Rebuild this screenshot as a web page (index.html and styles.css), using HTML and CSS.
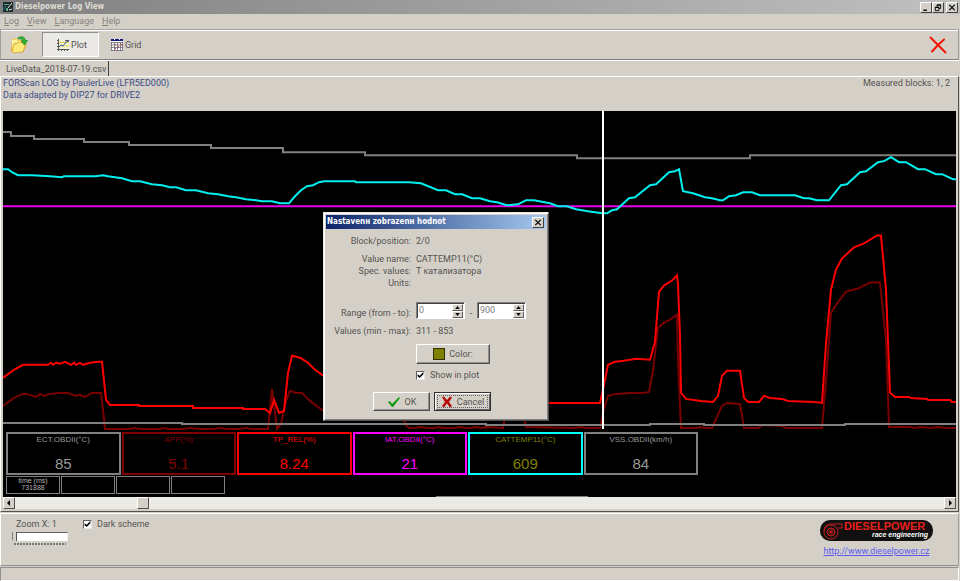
FILE: index.html
```html
<!DOCTYPE html>
<html lang="en">
<head>
  <meta charset="UTF-8" />
  <title>Dieselpower Log View</title>
  <link rel="stylesheet" href="styles.css">
</head>
<body>

  <header class="titlebar">
    <svg class="app-icon" viewBox="0 0 10 10">
      <rect width="10" height="10" fill="#1c2a2a" />
      <path d="M1 2h5v1H1zM3 6h2v3H3z" fill="#5fae8c" />
      <path d="M9 1L5 6M6 8l3-1" stroke="#dfe8e0" fill="none" />
      <path d="M0 8l3-4" stroke="#2f7fa8" fill="none" />
    </svg>
    <h1>Dieselpower Log View</h1>
    <div class="window-buttons">
      <button class="win-btn" aria-label="Minimize"><svg viewBox="0 0 10 10"><path d="M2 8h4" stroke="#000" stroke-width="1.5" /></svg></button>
      <button class="win-btn" aria-label="Restore"><svg viewBox="0 0 10 10"><path d="M4 4V2h4v4H6M4 2.5h4M2 4.5h4v4H2zM2 5h4" fill="none" stroke="#000" /></svg></button>
      <button class="win-btn win-close" aria-label="Close"><svg viewBox="0 0 10 10"><path d="M2 2l6 6M8 2L2 8" stroke="#000" stroke-width="1.3" /></svg></button>
    </div>
  </header>

  <nav class="menu">
    <a href="#"><u>L</u>og</a>
    <a href="#"><u>V</u>iew</a>
    <a href="#"><u>L</u>anguage</a>
    <a href="#"><u>H</u>elp</a>
  </nav>

  <div class="toolbar">
    <button class="tool tool-open" aria-label="Open">
      <svg width="20" height="20" viewBox="0 0 20 20">
        <path d="M2 16L3 4l5-1 1 2 6 0v3l3 1-3 7-11 2z" fill="#e8b93c" />
        <path d="M3 16l2-7 4-1 1-1 7 1-3 9-9 1z" fill="#ffe97a" stroke="#c99a2c" stroke-width=".7" />
        <path d="M3 5l5-1 1 2 4 0v1L9 7 8 8 5 8 3 13z" fill="#fff09a" />
        <path d="M9 3c3-2.500 7-1.500 7.500 2.500h2L15.500 10 12 6h2c-.5-2-2.500-2.500-5-2z" fill="#2fb52f" stroke="#117a1d" stroke-width=".6" />
      </svg>
    </button>
    <button class="tool active">
      <svg width="14" height="14" viewBox="0 0 14 14">
        <path d="M3 2h10v9H3z" fill="#f3f3d8" />
        <path d="M3 4.500h10M3 8h10" stroke="#e3d840" />
        <path d="M2.500 1v12M1 11.500h12M1 2.500h2M1 5.500h2M1 8.500h2M5.500 11v2M8.500 11v2M11.500 11v2M9 2.500h4" stroke="#555" fill="none" />
        <path d="M3 9l2-2 2 1 3-4 3-1" stroke="#3958a8" fill="none" />
      </svg>
      Plot
    </button>
    <button class="tool">
      <svg width="14" height="14" viewBox="0 0 14 14">
        <rect x="1" y="1" width="12" height="12" fill="#fff" />
        <path d="M1 4.500h12M1 7h12M1 9.500h12M1.500 4v9M4.500 4v9M7.500 4v9M10.500 4v9M12.500 4v9M1 12.500h12" stroke="#6c6470" stroke-width=".8" />
        <path d="M5 6h1v1H5zM8 8h1v1H8zM5 10h1v1H5zM11 6h1v1h-1z" fill="#e04040" />
        <path d="M1 1h12v2H1z" fill="#15157c" />
        <path d="M4 1h1v1H4zM9 1h1v1H9z" fill="#fff" />
      </svg>
      Grid
    </button>
    <button class="tool tool-exit" aria-label="Close file">
      <svg width="18" height="18" viewBox="0 0 18 18">
        <path d="M1.500 1.500L9 9l7.500 7.500M15 3.500L9 9l-6 6.500" fill="none" stroke="#f41400" stroke-width="2" stroke-linecap="round" />
      </svg>
    </button>
  </div>

  <div class="tabs">
    <button class="tab">LiveData_2018-07-19.csv</button>
  </div>

  <main class="page">
    <div class="file-info">
      <p class="source">FORScan LOG by PaulerLive (LFR5ED000)<br>Data adapted by DIP27 for DRIVE2</p>
      <p>Measured blocks: 1, 2</p>
    </div>

    <section class="plot">
      <svg class="curves" viewBox="3 111 953 320" preserveAspectRatio="none">
        <!-- ECT -->
        <polyline class="gray" points="3,132 11,132 11,136 34,136 34,139 84,139 84,142 129,142 129,145 211,145 211,148 283,148 283,152 365,152 365,155 577,155 577,158 750,158 750,155 956,155" />
        <!-- APP -->
        <polyline class="maroon" points="3,405 14,397 23,393 30,394 36,396 40,393 44,395 50,393 60,392 68,392 76,395 80,394 85,396 92,392 101,392 104,418 105,428 130,428 134,427 140,428 160,428 164,427 168,428 184,428 190,427 200,428 214,428 220,427 226,428 240,428 246,427 252,428 268,428 272,388 277,428 281,423 286,400 290,390 296,392 302,392 310,400 322,409 400,412 406,424 409,427 416,427 420,426 428,427 434,427 438,426 444,427 456,427 460,426 466,427 472,427 476,426 482,427 486,426 503,427 506,412 523,412 526,426 575,427 581,426 586,427 600,427 604,408 608,395 616,393 630,392 643,392 649,391 653,370 658,327 664,322 670,319 677,314 678,360 681,427 697,427 701,426 705,427 712,427 722,405 727,402 740,403 744,427 758,427 763,424 782,425 786,427 822,427 826,380 831,312 837,303 846,291 858,288 870,282 880,282 886,340 889,426 911,426 914,427 920,426 930,427 938,426 944,427 956,427" />
        <!-- TP_REL -->
        <polyline class="red" points="3,377 14,369 23,364 48,364 51,362 53,364 56,362 60,363 65,361 71,364 74,362 76,364 80,362 83,364 90,362 98,361 102,361 106,399 110,404 139,404 139,405 193,405 193,407 243,407 243,408 265,408 270,412 274,399 279,412 284,410 288,372 292,355 300,357 308,362 315,369 322,374 400,402 600,402 604,384 608,364 615,361 624,360 636,358 650,359 655,341 659,291 664,285 672,280 677,275 678,284 680,335 681,392 686,398 701,400 713,401 718,395 722,375 727,370 740,370 744,397 748,401 759,401 764,395 770,397 782,398 788,400 814,401 822,402 826,343 831,289 836,269 842,258 854,247 864,243 877,235 881,235 886,289 890,392 895,396 909,396 911,397 927,398 928,399 950,399 952,401 956,401" />
        <!-- IAT -->
        <polyline class="magenta" points="3,206 956,206" />
        <!-- CATTEMP11 -->
        <polyline class="cyan" points="3,169 8,169 12,172 18,175 32,175 50,176 62,177 64,176 96,176 103,175 108,176 122,178 132,181 140,181 152,184 162,185 170,187 176,187 186,190 196,190 208,193 218,194 228,196 236,197 246,199 256,200 262,201 272,201 280,203 289,203 295,196 301,190 307,186 313,185 319,182 324,181 355,181 356,182 409,182 421,183 438,190 446,190 455,194 462,194 472,198 480,198 490,201 497,202 507,205 518,204 526,200 534,200 550,203 558,206 567,206 576,209 588,211 602,213 607,213 612,210 617,209 629,198 635,197 650,185 656,184 669,172 675,171 679,169 683,191 693,193 705,197 712,198 720,200 723,200 729,196 736,195 743,192 752,192 760,195 795,195 804,198 809,198 817,200 829,200 841,185 847,184 860,172 866,171 878,162 884,161 891,157 899,162 906,162 918,169 925,169 936,174 942,174 953,179 956,179" />
        <!-- VSS -->
        <polyline class="gray" points="3,422 182,422 182,423 486,423 486,424 650,424 650,423 704,423 704,424 845,424 845,423 956,423" />
        <path class="cursor" d="M603 111V428" />
      </svg>

      <div class="gauges">
        <div class="gauge g-gray"><span>ECT.OBDII(°C)</span><b>85</b></div>
        <div class="gauge g-maroon"><span>APP(%)</span><b>5.1</b></div>
        <div class="gauge g-red"><span>TP_REL(%)</span><b>8.24</b></div>
        <div class="gauge g-magenta"><span>IAT.OBDII(°C)</span><b>21</b></div>
        <div class="gauge g-cattemp"><span>CATTEMP11(°C)</span><b>609</b></div>
        <div class="gauge g-gray"><span>VSS.OBDII(km/h)</span><b>84</b></div>
      </div>
      <div class="cells">
        <div class="cell">time (ms)<br>731888</div>
        <div class="cell"></div>
        <div class="cell"></div>
        <div class="cell"></div>
      </div>
    </section>

    <div class="scrollbar">
      <button class="scroll-btn" aria-label="Scroll left"><svg viewBox="0 0 10 10"><path d="M6 2v6L3 5z" /></svg></button>
      <div class="scroll-track"><div class="scroll-thumb"></div></div>
      <button class="scroll-btn" aria-label="Scroll right"><svg viewBox="0 0 10 10"><path d="M4 2v6l3-3z" /></svg></button>
    </div>
  </main>

  <footer class="options">
    <div class="zoom">
      <label for="zoomX">Zoom X: 1</label>
      <input type="range" id="zoomX" min="1" max="16" value="1">
      <div class="ticks"></div>
    </div>
    <label class="check"><input type="checkbox" checked> Dark scheme</label>
    <div class="brand">
      <div class="logo">
        <svg width="22" height="18" viewBox="0 0 22 18">
          <g fill="none" stroke="#c8201c">
            <circle cx="9" cy="10" r="7" />
            <circle cx="9" cy="10" r="4" />
            <path d="M9 6v8M5 10h8M6 7l6 6M12 7l-6 6" stroke-width=".8" />
            <path d="M2 9c0-4 3-7 7-7h11v4h-4" />
          </g>
        </svg>
        <div class="logo-text"><strong>DIESELPOWER</strong><em>race engineering</em></div>
      </div>
      <a href="http://www.dieselpower.cz">http://www.dieselpower.cz</a>
    </div>
  </footer>

  <div class="statusbar"></div>

  <form class="dialog">
    <div class="dialog-title">
      <h2>Nastavenн zobrazenн hodnot</h2>
      <button type="button" class="win-btn" aria-label="Close"><svg viewBox="0 0 10 10"><path d="M2 2l6 6M8 2L2 8" stroke="#000" stroke-width="1.3" /></svg></button>
    </div>
    <dl class="fields">
      <dt>Block/position:</dt><dd>2/0</dd>
      <dt class="group">Value name:</dt><dd class="group">CATTEMP11(°C)</dd>
      <dt>Spec. values:</dt><dd>T катализатора</dd>
      <dt>Units:</dt><dd></dd>
    </dl>
    <div class="range-row">
      <label for="rangeFrom">Range (from - to):</label>
      <div class="spin">
        <input type="text" id="rangeFrom" value="0">
        <div class="arrows">
          <button type="button" aria-label="Increase"><svg viewBox="0 0 6 4"><path d="M0 4l3-4 3 4z" /></svg></button>
          <button type="button" aria-label="Decrease"><svg viewBox="0 0 6 4"><path d="M0 0l3 4 3-4z" /></svg></button>
        </div>
      </div>
      <span class="dash">-</span>
      <div class="spin">
        <input type="text" id="rangeTo" aria-label="Range to" value="900">
        <div class="arrows">
          <button type="button" aria-label="Increase"><svg viewBox="0 0 6 4"><path d="M0 4l3-4 3 4z" /></svg></button>
          <button type="button" aria-label="Decrease"><svg viewBox="0 0 6 4"><path d="M0 0l3 4 3-4z" /></svg></button>
        </div>
      </div>
    </div>
    <dl class="fields minmax">
      <dt>Values (min - max):</dt><dd>311 - 853</dd>
    </dl>
    <div class="plot-options">
      <button type="button" class="btn btn-color"><span class="swatch"></span>Color:</button>
      <label class="check"><input type="checkbox" checked> Show in plot</label>
    </div>
    <div class="dialog-buttons">
      <button type="button" class="btn">
        <svg width="14" height="12" viewBox="0 0 14 12"><path d="M1 6l2-1 2 3 7-7 1 1-7 9H5z" fill="#0c9a0c" /></svg>OK
      </button>
      <button type="button" class="btn btn-default">
        <svg width="12" height="12" viewBox="0 0 12 12"><path d="M1 1l2-.5 3 3.500 3-3.500 2 1L8 6l3 4-2 1.500-3-4-3 4L1 10l3-4z" fill="#b80808" /></svg>Cancel
      </button>
    </div>
  </form>

</body>
</html>
```
FILE: styles.css
```css
* { box-sizing: border-box; }
body {
  margin: 0; min-height: 100vh;
  display: flex; flex-direction: column;
  background: #d4d0c8; color: #555350;
  font: 9px/12px Roboto, "Liberation Sans", Arial, sans-serif;
}
h1, h2, p, dl, dd { margin: 0; }
h1, h2 { font: bold 8px/12px "DejaVu Sans Condensed", "Noto Sans", sans-serif; }
button, input { font: inherit; color: inherit; margin: 0; padding: 0; }
svg { display: block; }

.titlebar {
  display: flex; align-items: center; height: 14px; padding: 0 2px 0 3px;
  background: linear-gradient(to right, #808080, #c0c0c0); color: #dedbd4;
}
.app-icon { width: 10px; height: 10px; margin-right: 2px; }
.window-buttons { display: flex; margin-left: auto; }
.win-btn {
  width: 12px; height: 11px; background: #d4d0c8;
  border: 1px solid; border-color: #fff #404040 #404040 #fff;
}
.win-btn svg { width: 100%; height: 100%; }
.win-close { margin-left: 2px; }

.menu { display: flex; gap: 8px; height: 15px; padding: 1px 4px; }
.menu a { color: #85827c; text-decoration: none; }

.toolbar {
  display: flex; align-items: center; height: 31px; margin-right: 1px; padding: 0 8px 0 6px;
  border: 1px solid; border-color: #a5a5a5 #a0a0a0 #808080;
  box-shadow: inset 0 1px #fff, 0 1px #fff;
}
.tool {
  display: flex; align-items: center; gap: 1px; height: 25px; padding: 0 10px;
  background: none; border: 1px solid transparent;
}
.tool-open { padding: 0 1px; margin-right: 11px; }
.tool.active { padding: 0 11px 0 13px; background: #ebe9e5; border-color: #909090 #fff #fff #909090; }
.tool-exit { margin-left: auto; padding: 0 2px; }

.tabs { display: flex; height: 15px; margin-top: 1px; padding-left: 1px; }
.tab {
  padding: 0 2px 0 5px; background: none;
  border: 0; border-right: 1px solid #404040;
}

.page {
  flex: 1; display: flex; flex-direction: column;
  margin-right: 1px; padding: 0 2px 2px;
  border: 1px solid; border-color: #fff #505050 #505050 #fff;
}
.file-info { display: flex; justify-content: space-between; height: 34px; padding: 0 6px 0 0; }
.source { color: #3c4c86; }

.plot {
  flex: 1; display: flex; flex-direction: column; padding-bottom: 3px;
  background: #000 linear-gradient(#808080, #808080) 54% 100% / 152px 1px no-repeat;
}
.curves { flex: 1; width: 100%; height: 0; min-height: 200px; }
.curves polyline, .curves path { fill: none; stroke-width: 2; vector-effect: non-scaling-stroke; }
.gray { stroke: #808080; }
.maroon { stroke: #780000; }
.red { stroke: #ff0000; }
.magenta { stroke: #e800e8; }
.cyan { stroke: #00f0f0; }
.cursor { stroke: #fff; }

.gauges {
  display: grid; grid-template-columns: repeat(6, 1fr); gap: 1px;
  max-width: 692px; margin-left: 3px;
}
.gauge {
  display: flex; flex-direction: column; align-items: center; justify-content: space-between;
  height: 43px; border: 2px solid;
  font: 8px/12px "Liberation Sans", Arial, sans-serif;
}
.gauge b { font-size: 15px; line-height: 18px; font-weight: normal; }
.g-gray { color: #999; border-color: #808080; }
.g-maroon { color: #800000; }
.g-red { color: #ff0000; }
.g-magenta { color: #ff00ff; }
.g-cattemp { color: #808000; border-color: #00ffff; }
.cells { display: grid; grid-template-columns: repeat(4, 54px); gap: 1px; margin: 1px 0 0 3px; }
.cell {
  height: 18px; border: 1px solid #808080; color: #b0b0b0;
  font: 7px/7px "Liberation Sans", Arial, sans-serif; text-align: center;
}

.scrollbar { display: flex; height: 12px; background: #ebeae4; }
.scroll-btn, .scroll-thumb {
  width: 12px; background: #d4d0c8;
  border: 1px solid; border-color: #fff #505050 #505050 #fff;
}
.scroll-track { flex: 1; display: flex; padding-left: 12.8%; }

.options {
  display: flex; height: 53px; margin: 1px 1px 0 0; padding: 4px 21px 0 11px;
  border: 1px solid; border-color: #fff #a0a0a0 #909090 #fff;
}
.zoom { width: 56px; margin-right: 15px; }
.zoom label { display: block; padding-left: 4px; }
.zoom input {
  appearance: none; display: block; width: 100%; height: 9px; margin-top: 2px;
  background: #fff; border: 1px solid; border-color: #606060 #eee #fff #808080;
}
.zoom input::-webkit-slider-thumb {
  appearance: none; width: 4px; height: 9px;
  background: #d4d0c8; border-right: 1px solid #505050;
}
.ticks {
  height: 2px; margin: 2px 2px 0;
  background: repeating-linear-gradient(to right, #777 0 2px, transparent 2px 3px);
}
.check { display: flex; align-items: center; gap: 5px; height: 12px; }
.check input {
  appearance: none; width: 9px; height: 9px; background: #fff;
  border: 1px solid; border-color: #606060 #e8e8e8 #e8e8e8 #606060;
}
.check input:checked::before {
  content: ""; display: block; width: 7px; height: 7px; background: #000;
  clip-path: polygon(8% 38%, 38% 62%, 92% 8%, 92% 40%, 38% 94%, 8% 68%);
}
.brand { display: flex; flex-direction: column; align-items: center; margin: 2px 4px 0 auto; }
.logo {
  display: flex; align-items: center; width: 113px; height: 21px; padding-left: 2px;
  background: #101010; border-radius: 10px;
  font-family: "Liberation Sans", Arial, sans-serif;
}
.logo-text { display: flex; flex-direction: column; width: 84px; }
.logo-text strong { color: #e8211b; font-size: 11px; line-height: 9px; }
.logo-text em { color: #fff; font-size: 7px; line-height: 8px; font-weight: bold; text-align: right; }
.brand a { margin-top: 4px; color: #5a5af0; }

.statusbar {
  height: 14px; margin: 1px 1px 0 0;
  border: 1px solid; border-color: #909090 #fff #fff #909090;
}

.dialog {
  position: absolute; left: 323px; top: 212px; width: 226px; padding: 1px 2px 9px 1px;
  background: #d4d0c8;
  border: 1px solid; border-color: #e8e6e0 #505050 #505050 #e8e6e0;
  box-shadow: inset 1px 1px #fff, inset -1px -1px #808080;
}
.dialog-title {
  display: flex; align-items: center; justify-content: space-between;
  height: 14px; margin: 1px 0 6px 1px; padding: 0 2px 0 1px;
  background: linear-gradient(to right, #0a246a, #a6caf0); color: #fff;
}
.fields { display: grid; grid-template-columns: 86px 1fr; column-gap: 5px; }
.fields dt { text-align: right; }
.fields .group { margin-top: 6px; }
.fields dd { min-height: 12px; }
.range-row { display: flex; align-items: flex-end; margin-top: 13px; }
.range-row label { width: 86px; margin-right: 5px; text-align: right; }
.spin {
  display: flex; width: 49px; height: 17px; background: #fff;
  border: 1px solid; border-color: #808080 #fff #fff #808080;
  box-shadow: inset 1px 1px #404040;
}
.spin input { flex: 1; min-width: 0; padding: 0 0 2px 2px; background: none; border: 0; outline: 0; color: #808080; }
.arrows { display: flex; flex-direction: column; width: 12px; padding: 1px 1px 0 0; }
.arrows button {
  flex: 1; display: grid; place-items: center; background: #d4d0c8;
  border: 1px solid; border-color: #fff #606060 #606060 #fff;
}
.arrows svg { width: 5px; height: 3px; }
.dash { width: 12px; text-align: center; }
.minmax { margin-top: 6px; }
.plot-options { margin: 7px 0 0 91px; }
.btn {
  display: flex; align-items: center; justify-content: center; gap: 4px;
  width: 57px; height: 19px; background: #d4d0c8;
  border: 1px solid; border-color: #fff #505050 #505050 #fff;
  box-shadow: inset -1px -1px #909090;
}
.btn-color { width: 74px; height: 20px; margin-bottom: 5px; }
.swatch { width: 12px; height: 12px; background: #808000; border: 1px solid #303000; }
.dialog-buttons { display: flex; gap: 4px; margin: 11px 0 0 48px; }
.btn-default { border-color: #303030; outline: 1px dotted #606060; outline-offset: -4px; box-shadow: inset 1px 1px #fff, inset -1px -1px #606060; }
```
